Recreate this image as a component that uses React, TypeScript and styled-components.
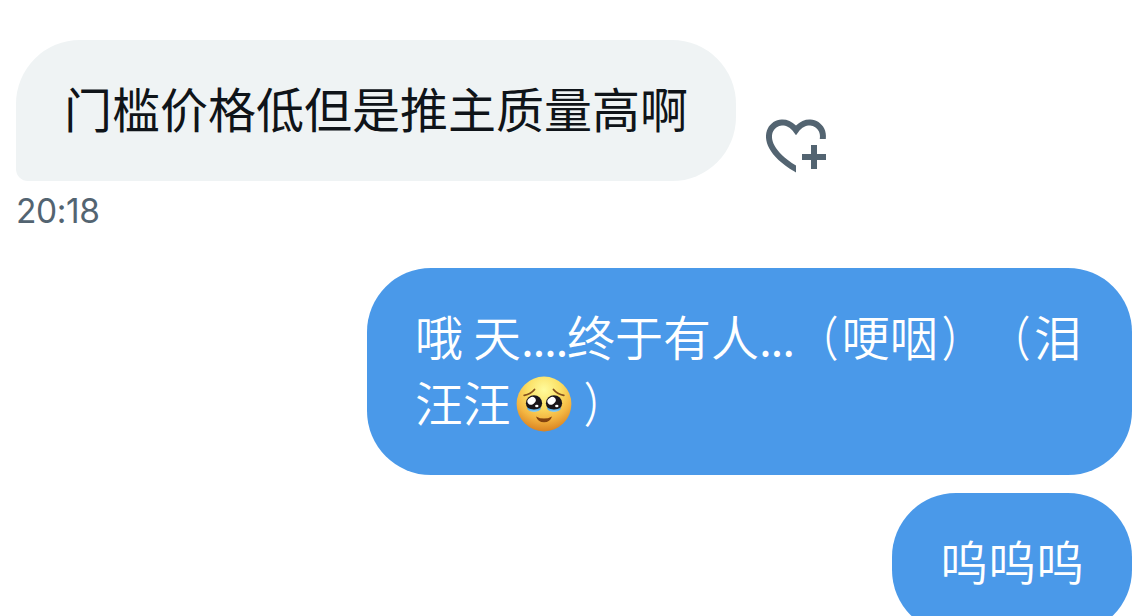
import React from "react";
import styled, { createGlobalStyle, css } from "styled-components";

const GlobalStyle = createGlobalStyle`
  * {
    box-sizing: border-box;
  }
  body {
    margin: 0;
    background: #ffffff;
    overflow: hidden;
  }
`;

const Conversation = styled.main`
  display: flex;
  flex-direction: column;
  height: 616px;
  padding: 40px 1px 0 16px;
  overflow: hidden;
  font-family: "Noto Sans CJK SC", sans-serif;
`;

const MessageRow = styled.div<{ $sent?: boolean; $gap?: number }>`
  display: flex;
  flex-shrink: 0;
  align-items: flex-end;
  justify-content: ${({ $sent }) => ($sent ? "flex-end" : "flex-start")};
  margin-top: ${({ $gap }) => $gap || 0}px;
`;

const Bubble = styled.div<{ $sent?: boolean }>`
  padding: 34px 48px 41px;
  border-radius: 64px;
  font-size: 48px;
  line-height: 66px;
  white-space: nowrap;
  text-spacing-trim: space-all;
  ${({ $sent }) =>
    $sent
      ? css`
          background: #4a99e9;
          color: #ffffff;
          font-weight: 350;
        `
      : css`
          background: #eff3f4;
          color: #0f1419;
          font-weight: 400;
          border-bottom-left-radius: 12px;
        `}
`;

const Line = styled.div<{ $width?: number }>`
  display: flex;
  height: 66px;
  ${({ $width }) => $width && `width: ${$width}px;`}
`;

const Dots = styled.span`
  letter-spacing: -1.4px;
`;

const Gap = styled.span`
  width: 10px;
  white-space: pre;
`;

// full-width brackets with a flatter curve
const Paren = styled.span<{ $open?: boolean }>`
  transform: scaleX(0.81);
  transform-origin: ${({ $open }) => ($open ? "28.5px" : "19.5px")} 50%;
`;

const ReactionButton = styled.button`
  display: flex;
  margin: 0 0 0 24px;
  padding: 0;
  border: 0;
  background: none;
  color: #536471;
`;

const Time = styled.time`
  height: 40px;
  margin-top: 10px;
  color: #536471;
  font-family: Inter, sans-serif;
  font-size: 33.5px;
  letter-spacing: -0.4px;
  line-height: 40px;
`;

const FaceIcon = styled.svg`
  flex-shrink: 0;
  width: 56px;
  height: 56px;
  margin: 8px 8px 0 5px;
`;

const HeartPlus = () => (
  <svg width="72" height="72" viewBox="0 0 24 24" fill="currentColor">
    <path d="M17 12v3h-2.998v2h3v3h2v-3h3v-2h-3.001v-3H17zm-5 6.839c-3.871-2.34-6.053-4.639-7.127-6.609-1.112-2.04-1.031-3.7-.479-4.82.561-1.13 1.667-1.84 2.91-1.91 1.222-.06 2.68.51 3.892 2.16l.806 1.09.805-1.09c1.211-1.65 2.668-2.22 3.89-2.16 1.242.07 2.347.78 2.908 1.91.334.677.49 1.554.321 2.59h2.011c.153-1.283-.039-2.469-.539-3.48-.887-1.79-2.647-2.91-4.601-3.01-1.65-.09-3.367.56-4.796 2.01-1.43-1.45-3.147-2.1-4.798-2.01-1.954.1-3.714 1.22-4.601 3.01-.896 1.81-.846 4.17.514 6.67 1.353 2.48 4.003 5.12 8.382 7.67l.502.299v-2.32z" />
  </svg>
);

const TearyFace = () => (
  <FaceIcon viewBox="0 0 56 56" role="img" aria-label="🥹">
    <defs>
      <radialGradient id="skin" cx="50%" cy="24%" r="76%">
        <stop offset="0" stopColor="#fffb9c" />
        <stop offset="0.4" stopColor="#fbe065" />
        <stop offset="0.72" stopColor="#f3b440" />
        <stop offset="1" stopColor="#d98322" />
      </radialGradient>
      <linearGradient id="tear" x1="0" y1="0" x2="0" y2="1">
        <stop offset="0" stopColor="#3c98dc" />
        <stop offset="1" stopColor="#8ed2f5" />
      </linearGradient>
    </defs>
    <circle cx="28" cy="28" r="27.4" fill="url(#skin)" />
    <path
      d="M8.2 19.3c4.5-.8 8-2.8 10.3-5.8M47.8 19.3c-4.5-.8-8-2.8-10.3-5.8"
      fill="none"
      stroke="#85501c"
      strokeWidth="1.8"
      strokeLinecap="round"
    />
    {[18, 38].map((x) => (
      <g key={x}>
        <ellipse cx={x} cy="27.2" rx="8.1" ry="7.9" fill="#19151a" />
        <path
          d={`M${x - 7} 31.5q7 3.8 14 0q-.5 4.4-7 4.4t-7-4.4z`}
          fill="url(#tear)"
        />
        <ellipse
          cx={x - 2.4}
          cy="24.8"
          rx="4.4"
          ry="3.5"
          fill="#ffffff"
          transform={`rotate(-35 ${x - 2.4} 24.8)`}
        />
        <ellipse cx={x + 2.8} cy="30" rx="1.7" ry="1.3" fill="#ffffff" />
      </g>
    ))}
    <path d="M20 40.4q8 4.4 16 0q-1.8 5.8-8 5.8t-8-5.8z" fill="#82420f" />
  </FaceIcon>
);

const App = () => {
  return (
    <>
      <GlobalStyle />
      <Conversation>
        <MessageRow>
          <Bubble>
            <Line>门槛价格低但是推主质量高啊</Line>
          </Bubble>
          <ReactionButton aria-label="React">
            <HeartPlus />
          </ReactionButton>
        </MessageRow>
        <Time>20:18</Time>
        <MessageRow $sent $gap={37}>
          <Bubble $sent>
            <Line $width={669}>
              <span>哦</span>
              <Gap> </Gap>
              <span>天</span>
              <Dots>....</Dots>
              <span>终于有人</span>
              <Dots>...</Dots>
              <Paren $open>（</Paren>
              <span>哽咽</span>
              <Paren>）</Paren>
              <Paren $open>（</Paren>
              <span>泪</span>
            </Line>
            <Line>
              <span>汪汪</span>
              <TearyFace />
              <Paren>）</Paren>
            </Line>
          </Bubble>
        </MessageRow>
        <MessageRow $sent $gap={18}>
          <Bubble $sent>
            <Line>呜呜呜</Line>
          </Bubble>
        </MessageRow>
      </Conversation>
    </>
  );
};

export default App;
